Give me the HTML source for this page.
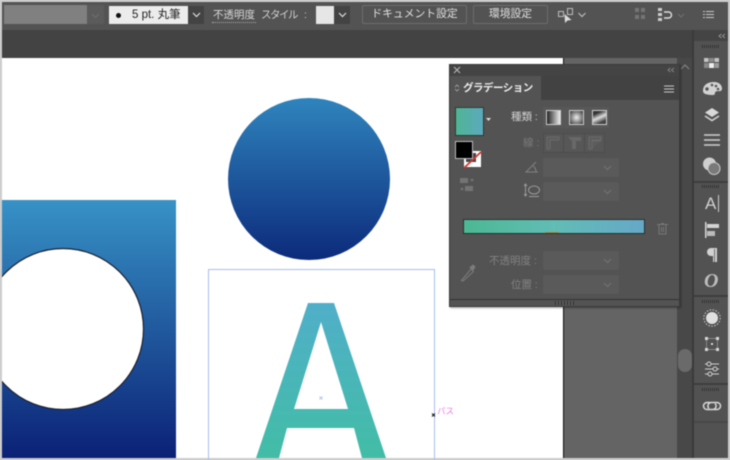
<!DOCTYPE html>
<html lang="ja"><head><meta charset="utf-8"><title>グラデーション</title>
<style>
html,body{margin:0;padding:0;background:#cdcdcd;overflow:hidden}
#r{position:relative;width:730px;height:460px;overflow:hidden;background:#cdcdcd;font-family:"Liberation Sans","Noto Sans CJK JP",sans-serif;color:#ddd;filter:blur(.4px)}
#r div,#r span,#r svg{position:absolute;display:block;box-sizing:border-box}
.t{white-space:nowrap;line-height:14px}
.dd{background:#5a5a5a;border-radius:2px}
</style></head><body><div id="r">

<!-- toolbar -->
<div style="left:2px;top:2px;width:726px;height:28px;background:#535353"></div>
<div style="left:2px;top:30px;width:726px;height:28px;background:#434343"></div>
<div style="left:4px;top:5px;width:83px;height:19px;background:#808080"></div>
<div style="left:87px;top:5px;width:17px;height:19px;background:#5b5b5b"></div>
<svg style="left:91px;top:13px" width="9" height="6"><path d="M1 1l3.500 3.500L8 1" fill="none" stroke="#6e6e6e"/></svg>
<div style="left:109px;top:6px;width:79px;height:18px;background:#ececec"></div>
<div style="left:116px;top:13px;width:5px;height:5px;border-radius:50%;background:#111"></div>
<div class="t" style="left:132px;top:8px;font-size:11.500px;color:#222">5 pt. 丸筆</div>
<div style="left:188px;top:6px;width:16px;height:18px;background:#434343"></div>
<svg style="left:192px;top:12px" width="9" height="6"><path d="M1 1l3.500 3.500L8 1" fill="none" stroke="#ddd" stroke-width="1.200"/></svg>
<div class="t" style="left:213px;top:8px;font-size:10.500px;color:#d8d8d8">不透明度</div>
<div style="left:212px;top:22px;width:44px;height:0;border-top:1px dotted #aaa"></div>
<div class="t" style="left:261px;top:8px;font-size:10.500px;color:#d0d0d0;letter-spacing:-1.500px">スタイル</div>
<div class="t" style="left:304px;top:8px;font-size:10.500px;color:#d0d0d0">:</div>
<div style="left:316px;top:6px;width:18px;height:18px;background:#e6e6e6"></div>
<div style="left:334px;top:6px;width:16px;height:18px;background:#434343"></div>
<svg style="left:338px;top:12px" width="9" height="6"><path d="M1 1l3.500 3.500L8 1" fill="none" stroke="#ddd" stroke-width="1.200"/></svg>
<div class="t" style="left:362px;top:5px;width:105px;height:19px;border:1px solid #6d6d6d;border-radius:2px;font-size:10.800px;line-height:17px;text-align:center;color:#e0e0e0">ドキュメント設定</div>
<div class="t" style="left:473px;top:5px;width:75px;height:19px;border:1px solid #6d6d6d;border-radius:2px;font-size:10.800px;line-height:17px;text-align:center;color:#e0e0e0">環境設定</div>
<svg style="left:556px;top:5px" width="34" height="19" fill="none" stroke="#bbb"><path d="M2.500 6.500h5v5h-5zM11.500 3.500h5v6h-5z"/><path d="M8.500 9l.500 9 2.500-2.500 4-.500z" fill="#ddd" stroke="none"/><path d="M22.500 8l3.500 3.500L29.500 8" stroke-width="1.200"/></svg>
<svg style="left:634px;top:7px" width="13" height="14" fill="#757575"><rect x="1" y="1" width="4" height="4"/><rect x="7" y="1" width="4" height="4"/><rect x="1" y="8" width="4" height="4"/><rect x="7" y="8" width="4" height="4"/></svg>
<svg style="left:657px;top:6px" width="32" height="18" fill="none"><rect x="1" y="2" width="4" height="3" fill="#ccc"/><rect x="1" y="7" width="4" height="3" fill="#ccc"/><rect x="1" y="12" width="4" height="3" fill="#ccc"/><path d="M7 6h4.500a3 3 0 0 1 0 6H7" stroke="#ddd" stroke-width="1.400"/><path d="M21 8l3 3 3-3" stroke="#707070"/></svg>
<svg style="left:702px;top:9px" width="13" height="12" fill="none" stroke="#c8c8c8"><path d="M4 2.500h8M4 5.500h8M4 8.500h8M1 2.500h2M1 5.500h2M1 8.500h2"/></svg>

<!-- canvas -->
<div style="left:2px;top:58px;width:561px;height:400px;background:#fff"></div>
<div style="left:563px;top:58px;width:1px;height:400px;background:#111"></div>
<div style="left:564px;top:58px;width:113px;height:400px;background:#646464"></div>
<div style="left:677px;top:58px;width:15px;height:400px;background:#484848"></div>
<svg style="left:680px;top:64px" width="10" height="6"><path d="M1 5l4-4 4 4" fill="none" stroke="#888"/></svg>
<div style="left:678px;top:349px;width:14px;height:23px;background:#6a6a6a;border-radius:7px"></div>

<!-- artwork -->
<div style="left:2px;top:200px;width:174px;height:258px;background:linear-gradient(#3792c6,#0b2176)"></div>
<svg style="left:0;top:0" width="730" height="460">
<defs><linearGradient id="c" x1="0" y1="0" x2="0" y2="1"><stop offset="0" stop-color="#2f84bd"/><stop offset="1" stop-color="#0c2a7b"/></linearGradient>
<linearGradient id="a" gradientUnits="userSpaceOnUse" x1="0" y1="302" x2="0" y2="458"><stop offset="0" stop-color="#50afc9"/><stop offset="1" stop-color="#42bda6"/></linearGradient>
<clipPath id="cl"><rect x="2" y="200" width="174" height="258"/></clipPath></defs>
<circle cx="63" cy="329" r="80.500" fill="#fff" stroke="#1b2030" stroke-width="1.200" clip-path="url(#cl)"/>
<circle cx="309" cy="179" r="81" fill="url(#c)"/>
<rect x="208.500" y="269.500" width="226" height="200" fill="none" stroke="#a9bdec"/>
<path fill="url(#a)" fill-rule="evenodd" d="M308 303H334L386 458H362L354 428H287L279 458H256ZM321 322L294 409H348Z"/>
<path d="M319.500 396.500l3 3m0-3l-3 3" stroke="#b4c4f0" fill="none"/>
<path d="M432 413.500l3 3m0-3l-3 3" stroke="#111" fill="none"/>
</svg>
<div class="t" style="left:437px;top:404px;font-size:8.500px;color:#e77fe0">パス</div>

<!-- gradient panel -->
<div style="left:449px;top:64px;width:231px;height:243px;background:#535353;border:1px solid #3a3a3a;box-shadow:1px 1px 2px rgba(0,0,0,.35)"></div>
<div style="left:450px;top:65px;width:229px;height:11px;background:#444"></div>
<div style="left:450px;top:76px;width:229px;height:24px;background:#424242"></div>
<div style="left:450px;top:76px;width:91px;height:24px;background:#535353"></div>
<svg style="left:453px;top:66px" width="8" height="8"><path d="M1 1l6 6m0-6L1 7" stroke="#bbb" fill="none"/></svg>
<svg style="left:667px;top:67px" width="8" height="6"><path d="M3.500 1L1 3l2.500 2M7 1L4.500 3 7 5" stroke="#999" fill="none" stroke-width=".8"/></svg>
<svg style="left:454px;top:84px" width="6" height="8"><path d="M1 3l2-2 2 2M1 5l2 2 2-2" stroke="#aaa" fill="none" stroke-width=".8"/></svg>
<div class="t" style="left:463px;top:81px;font-size:10.500px;color:#eee;font-weight:bold;letter-spacing:-.5px">グラデーション</div>
<svg style="left:663px;top:85px" width="12" height="8"><path d="M1 1h10M1 4h10M1 7h10" stroke="#c8c8c8"/></svg>

<div style="left:455px;top:107px;width:29px;height:29px;background:linear-gradient(90deg,#4fb595,#5ca9bd);border:1px solid #2d3a2c"></div>
<svg style="left:486px;top:118px" width="6" height="4"><path d="M0 0h5L2.500 3z" fill="#ddd"/></svg>
<div style="left:464px;top:151px;width:17px;height:16px;background:#fff"></div>
<div style="left:466px;top:153px;width:10px;height:9px;background:#444"></div>
<svg style="left:462px;top:150px" width="22" height="18"><path d="M2 18L19 2" stroke="#d8352c" stroke-width="1.800"/></svg>
<div style="left:455px;top:141px;width:18px;height:18px;background:#000;border:1px solid #bbb"></div>
<svg style="left:459px;top:177px" width="16" height="15" fill="#747474"><rect x="1" y="1" width="8" height="5"/><path d="M11 2h4l-2 3z"/><rect x="6" y="9" width="8" height="5"/><path d="M1 13l2-3 2 3z"/></svg>

<div class="t" style="left:511px;top:110px;font-size:10.500px;color:#d4d4d4">種類 :</div>
<div style="left:543px;top:107px;width:66px;height:21px;background:#585858"></div>
<div style="left:546px;top:110px;width:15px;height:15px;background:linear-gradient(90deg,#222,#eee);border:1px solid #ccc"></div>
<div style="left:569px;top:110px;width:15px;height:15px;background:radial-gradient(circle,#eee,#333);border:1px solid #ccc"></div>
<div style="left:592px;top:110px;width:15px;height:15px;background:linear-gradient(155deg,#333 20%,#ddd 50%,#444 80%);border:1px solid #ccc"></div>
<div class="t" style="left:523px;top:136px;font-size:10.500px;color:#7b7b7b">線 :</div>
<svg style="left:543px;top:133px" width="62" height="20" fill="none" stroke="#696969"><rect x=".5" y=".5" width="61" height="19" fill="#575757" stroke="#4c4c4c"/><path d="M20.500 1v18M41.500 1v18" stroke="#4c4c4c"/><path d="M4 16V4h12v3H7v9z" fill="#5c5c5c"/><path d="M25 4h13v4h-5v8h-4V8z" fill="#686868" stroke="none"/><path d="M46 16V4h12v3h-9v9zM49 16V8h9" fill="#5c5c5c"/></svg>
<svg style="left:524px;top:159px" width="16" height="14" fill="none" stroke="#828282"><path d="M14 13H2L12 3M9 7q3 2 3 6"/></svg>
<div class="dd" style="left:543px;top:158px;width:76px;height:19px"></div>
<svg style="left:603px;top:165px" width="9" height="6"><path d="M1 1l3.500 3.500L8 1" fill="none" stroke="#747474"/></svg>
<svg style="left:523px;top:182px" width="18" height="17" fill="none" stroke="#9a9a9a"><path d="M2.500 2v12M1 4l1.500-2L4 4M1 12l1.500 2L4 12"/><ellipse cx="11" cy="8" rx="5.500" ry="4"/><path d="M6 14.500h10"/></svg>
<div class="dd" style="left:543px;top:182px;width:76px;height:19px"></div>
<svg style="left:603px;top:189px" width="9" height="6"><path d="M1 1l3.500 3.500L8 1" fill="none" stroke="#747474"/></svg>

<div style="left:463px;top:219px;width:182px;height:15px;background:linear-gradient(90deg,#4cb893,#61bdb5 50%,#66a8c8);border:1px solid #28302f"></div>
<div style="left:545px;top:232px;width:14px;height:1px;background:#a88a3a"></div>
<svg style="left:656px;top:222px" width="13" height="13" fill="none" stroke="#777"><path d="M1 2.500h11M3 3v9h7V3M5 1.500h3M5.500 5v5M7.500 5v5"/></svg>

<svg style="left:460px;top:264px" width="16" height="18" fill="none" stroke="#7c7c7c"><path d="M1.500 16.500L11 5l2.500 2.500L3 17z"/><path d="M10 3.500l3-2.500 2 2-2 3z" fill="#7c7c7c"/></svg>
<div class="t" style="left:489px;top:254px;font-size:10.500px;color:#828282">不透明度 :</div>
<div class="dd" style="left:543px;top:251px;width:76px;height:19px"></div>
<svg style="left:603px;top:258px" width="9" height="6"><path d="M1 1l3.500 3.500L8 1" fill="none" stroke="#747474"/></svg>
<div class="t" style="left:511px;top:278px;font-size:10.500px;color:#828282">位置 :</div>
<div class="dd" style="left:543px;top:275px;width:76px;height:19px"></div>
<svg style="left:603px;top:282px" width="9" height="6"><path d="M1 1l3.500 3.500L8 1" fill="none" stroke="#747474"/></svg>
<div style="left:450px;top:299px;width:229px;height:1px;background:#333"></div>
<div style="left:555px;top:301px;width:19px;height:4px;background:repeating-linear-gradient(90deg,#2f2f2f 0 1px,#5a5a5a 1px 3px)"></div>

<!-- right dock -->
<div style="left:692px;top:30px;width:2px;height:428px;background:#3a3a3a"></div>
<div style="left:694px;top:30px;width:34px;height:428px;background:#525252"></div>
<div style="left:694px;top:30px;width:34px;height:11px;background:#444"></div>
<svg style="left:718px;top:33px" width="8" height="6"><path d="M3.500 1L1 3l2.500 2M7 1L4.500 3 7 5" stroke="#aaa" fill="none" stroke-width=".8"/></svg>
<div style="left:702px;top:45px;width:18px;height:3px;background:repeating-linear-gradient(90deg,#2f2f2f 0 1px,#5a5a5a 1px 2px)"></div>
<div style="left:694px;top:181px;width:34px;height:2px;background:#3d3d3d"></div>
<div style="left:702px;top:185px;width:18px;height:3px;background:repeating-linear-gradient(90deg,#2f2f2f 0 1px,#5a5a5a 1px 2px)"></div>
<div style="left:694px;top:295px;width:34px;height:2px;background:#3d3d3d"></div>
<div style="left:702px;top:300px;width:18px;height:3px;background:repeating-linear-gradient(90deg,#2f2f2f 0 1px,#5a5a5a 1px 2px)"></div>
<div style="left:694px;top:383px;width:34px;height:2px;background:#3d3d3d"></div>
<div style="left:702px;top:388px;width:18px;height:3px;background:repeating-linear-gradient(90deg,#2f2f2f 0 1px,#5a5a5a 1px 2px)"></div>
<div style="left:694px;top:421px;width:34px;height:2px;background:#474747"></div>

<svg style="left:700px;top:54px" width="24" height="96">
<g fill="#c4c4c4"><rect x="4" y="4" width="4.500" height="4"/><rect x="9" y="4" width="5" height="4" fill="#8a8a8a"/><rect x="14.500" y="4" width="4.500" height="4"/><rect x="4" y="9" width="4.500" height="5" fill="#8a8a8a"/><rect x="9" y="9" width="5" height="5" fill="#eee"/><rect x="14.500" y="9" width="4.500" height="5" fill="#9a9a9a"/></g>
<path d="M3 37c0-7 6-9 11-9 5 0 8 3 8 6.500 0 4-4 2-6 3-2 1 0 3.500-3 3.500-6 0-10-1-10-4z" fill="#d2d2d2"/>
<circle cx="12" cy="31" r="1.300" fill="#555"/><circle cx="16" cy="32" r="1.300" fill="#555"/><circle cx="18" cy="35" r="1.300" fill="#555"/><circle cx="7" cy="35" r="1.700" fill="#555"/>
<path d="M12 54l7 4.500-7 4.500-7-4.500z" fill="#d8d8d8"/><path d="M5 62l7 4.500 7-4.500" fill="none" stroke="#d0d0d0" stroke-width="1.600"/>
<path d="M4 81h16M4 86h16M4 91h16" stroke="#d0d0d0" stroke-width="1.600"/>
</svg>
<svg style="left:700px;top:154px" width="24" height="24"><circle cx="9.500" cy="10" r="6.500" fill="#cfcfcf"/><circle cx="14" cy="14.500" r="6" fill="#7a7a7a" stroke="#ccc"/></svg>
<div class="t" style="left:705px;top:195px;font-size:17px;line-height:18px;color:#d0d0d0">A</div>
<div style="left:718px;top:195px;width:1px;height:17px;background:#ccc"></div>
<svg style="left:704px;top:221px" width="17" height="18" fill="#d4d4d4"><rect x="1" y="1" width="1.500" height="16"/><rect x="3" y="3" width="12" height="4"/><rect x="3" y="10" width="8" height="5" fill="#bbb"/></svg>
<svg style="left:705px;top:247px" width="14" height="16"><path d="M12 1H6a4 4 0 0 0 0 8h2v6h1.200V2H10v13h2z" fill="#d2d2d2"/></svg>
<div class="t" style="left:704px;top:271px;font-family:'Liberation Serif',serif;font-style:italic;font-weight:bold;font-size:20px;line-height:20px;color:#bdbdbd">O</div>
<svg style="left:702px;top:307px" width="20" height="96" fill="none">
<circle cx="10" cy="11" r="6" fill="#e0e0e0"/><circle cx="10" cy="11" r="8.200" stroke="#d0d0d0" stroke-dasharray="1.500 1.500"/>
<rect x="4.500" y="31.500" width="11" height="11" stroke="#bbb" stroke-dasharray="1 1"/>
<g fill="#d8d8d8"><rect x="3" y="30" width="3" height="3"/><rect x="14" y="30" width="3" height="3"/><rect x="3" y="41" width="3" height="3"/><rect x="14" y="41" width="3" height="3"/><rect x="9" y="36" width="2" height="2"/></g>
<path d="M3 57h14M3 62h14M3 67h14" stroke="#cfcfcf"/><circle cx="7" cy="57" r="2" fill="#525252" stroke="#d4d4d4"/><circle cx="13" cy="62" r="2" fill="#525252" stroke="#d4d4d4"/><circle cx="8" cy="67" r="2" fill="#525252" stroke="#d4d4d4"/>
</svg>
<svg style="left:702px;top:399px" width="20" height="14" fill="none" stroke="#d8d8d8" stroke-width="1.500"><path d="M8 3.500H5a3.500 3.500 0 0 0 0 7h6a3.500 3.500 0 0 0 2-6"/><path d="M12 10.500h3a3.500 3.500 0 0 0 0-7H9a3.500 3.500 0 0 0-2 6"/></svg>

</div></body></html>
